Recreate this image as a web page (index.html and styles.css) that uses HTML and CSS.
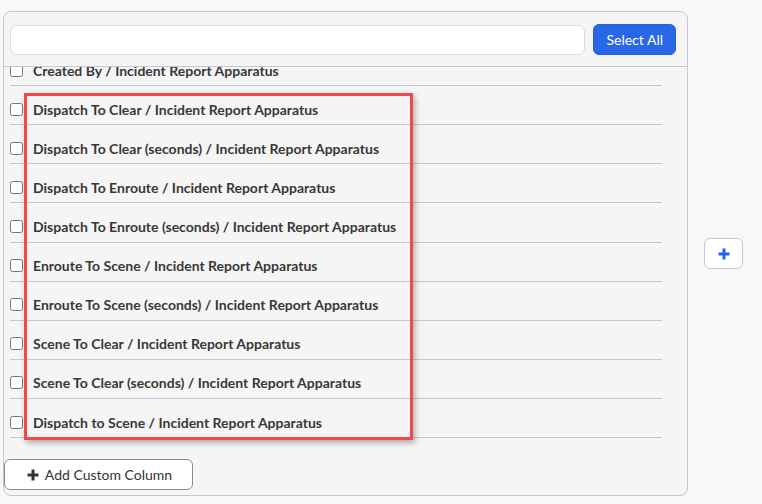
FILE: index.html
```html
<!DOCTYPE html>
<html lang="en">
<head>
  <meta charset="UTF-8">
  <title>Columns</title>
  <link rel="stylesheet" href="styles.css">
</head>
<body>
  <div class="panel">
    <div class="panel-header">
      <input type="text" class="search">
      <button class="select-all">Select All</button>
    </div>
    <div class="column-list">
      <ul>
        <li><input type="checkbox"><span>Created By / Incident Report Apparatus</span></li>
        <li><input type="checkbox"><span>Dispatch To Clear / Incident Report Apparatus</span></li>
        <li><input type="checkbox"><span>Dispatch To Clear (seconds) / Incident Report Apparatus</span></li>
        <li><input type="checkbox"><span>Dispatch To Enroute / Incident Report Apparatus</span></li>
        <li><input type="checkbox"><span>Dispatch To Enroute (seconds) / Incident Report Apparatus</span></li>
        <li><input type="checkbox"><span>Enroute To Scene / Incident Report Apparatus</span></li>
        <li><input type="checkbox"><span>Enroute To Scene (seconds) / Incident Report Apparatus</span></li>
        <li><input type="checkbox"><span>Scene To Clear / Incident Report Apparatus</span></li>
        <li><input type="checkbox"><span>Scene To Clear (seconds) / Incident Report Apparatus</span></li>
        <li><input type="checkbox"><span>Dispatch to Scene / Incident Report Apparatus</span></li>
      </ul>
    </div>
    <div class="panel-footer">
      <button class="add-column">
        <svg width="12" height="12" viewBox="0 0 12 12"><path d="M6 0.5v11M0.5 6h11" stroke="#333" stroke-width="3"/></svg>
        Add Custom Column
      </button>
    </div>
  </div>

  <button class="add-btn">
    <svg width="12" height="12" viewBox="0 0 12 12"><path d="M6 0.5v11M0.5 6h11" stroke="#2563eb" stroke-width="3"/></svg>
  </button>

  <div class="highlight"></div>
</body>
</html>
```

FILE: styles.css
```css
body {
  margin: 0;
  padding: 11px 0 0 3px;
  background-color: #f8f8f8;
  font-family: Lato, "Liberation Sans", sans-serif;
  color: #333;
  display: flex;
  align-items: center;
  gap: 16px;
}

.panel {
  width: 683px;
  height: 483px;
  border: 1px solid #c6c6d2;
  border-radius: 8px;
  background-color: #f5f5f5;
  display: flex;
  flex-direction: column;
  overflow: hidden;
}

.panel-header {
  display: flex;
  align-items: center;
  gap: 8px;
  padding: 12px 11px 11px 6px;
  border-bottom: 1px solid #c6c6d2;
}

.search {
  flex: 1;
  height: 30px;
  box-sizing: border-box;
  border: 1px solid #dadadf;
  border-radius: 7px;
  background: #fff;
  margin: 0;
}

.select-all {
  height: 31px;
  padding: 0 12px;
  border: 1px solid #2a5fd8;
  border-radius: 6px;
  background-color: #2a67e8;
  color: #fff;
  font-family: inherit;
  font-size: 14px;
}

.column-list {
  flex: 1;
  overflow: hidden;
}

.column-list ul {
  list-style: none;
  margin: -20px 25px 0 6px;
  padding: 0;
}

.column-list li {
  display: flex;
  align-items: center;
  height: 16.11px;
  padding: 15px 0 7px;
  border-bottom: 1px solid #c6c6d2;
  font-size: 14px;
  font-weight: 700;
  color: #383838;
  white-space: nowrap;
}

.column-list input {
  width: 13px;
  height: 13px;
  margin: 0 10px 0 0;
}

.panel-footer {
  padding: 0 0 5px;
}

.add-column {
  display: flex;
  align-items: center;
  gap: 6px;
  height: 31px;
  width: 189px;
  padding: 0 0 0 2px;
  justify-content: center;
  border: 1px solid #8a8a90;
  border-radius: 6px;
  background: #fff;
  color: #333;
  font-family: inherit;
  font-size: 14px;
}

.add-btn {
  width: 39px;
  height: 31px;
  padding: 0;
  display: flex;
  align-items: center;
  justify-content: center;
  border: 1px solid #c6c6d2;
  border-radius: 6px;
  background: #fff;
}

.highlight {
  position: absolute;
  left: 24px;
  top: 93px;
  width: 383px;
  height: 341px;
  border: 3px solid #f4474a;
  box-shadow: 2px 3px 6px rgba(0, 0, 0, 0.3);
}
```
